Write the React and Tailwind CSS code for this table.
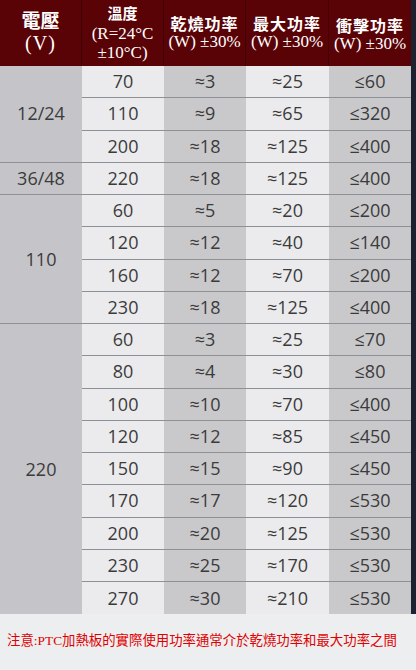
import React from 'react'

const groups = [
  {
    volt: '12/24',
    rows: [
      ['70', '≈3', '≈25', '≤60'],
      ['110', '≈9', '≈65', '≤320'],
      ['200', '≈18', '≈125', '≤400']
    ]
  },
  {
    volt: '36/48',
    rows: [['220', '≈18', '≈125', '≤400']]
  },
  {
    volt: '110',
    rows: [
      ['60', '≈5', '≈20', '≤200'],
      ['120', '≈12', '≈40', '≤140'],
      ['160', '≈12', '≈70', '≤200'],
      ['230', '≈18', '≈125', '≤400']
    ]
  },
  {
    volt: '220',
    rows: [
      ['60', '≈3', '≈25', '≤70'],
      ['80', '≈4', '≈30', '≤80'],
      ['100', '≈10', '≈70', '≤400'],
      ['120', '≈12', '≈85', '≤450'],
      ['150', '≈15', '≈90', '≤450'],
      ['170', '≈17', '≈120', '≤530'],
      ['200', '≈20', '≈125', '≤530'],
      ['230', '≈25', '≈170', '≤530'],
      ['270', '≈30', '≈210', '≤530']
    ]
  }
]

const colBg = ['bg-[#ebebed]', 'bg-[#c9c9cc]', 'bg-[#ebebed]', 'bg-[#c9c9cc]']

const headFont = { fontFamily: '"Liberation Serif", "Noto Sans CJK TC", serif' }

const App = () => {
  const total = groups.reduce((n, g) => n + g.rows.length, 0)
  let rowIndex = 0

  return (
    <div className="w-[416px] h-[670px] bg-[#eceef0] overflow-hidden">
      <div className="flex">
        <div className="w-[411px]">
          {/* header */}
          <div
            className="grid grid-cols-[82px_82px_82px_83px_82px] h-[66px] bg-[#5a0307] text-white"
            style={headFont}
          >
            <div className="flex flex-col items-center justify-center border-r border-[#3f0104]">
              <span className="text-[19px] leading-[20px] font-semibold">電壓</span>
              <span className="text-[20px] leading-[22px] tracking-[1px]">(V)</span>
            </div>
            <div className="flex flex-col items-center justify-center text-[17px] leading-[19px] border-r border-[#3f0104]">
              <span className="text-[15px] font-semibold">溫度</span>
              <span>(R=24°C</span>
              <span>±10°C)</span>
            </div>
            <div className="flex flex-col items-center justify-center text-[17px] leading-[17px] border-r border-[#3f0104] whitespace-nowrap">
              <span className="text-[16px] tracking-[1px] font-semibold">乾燒功率</span>
              <span>(W) ±30%</span>
            </div>
            <div className="flex flex-col items-center justify-center text-[17px] leading-[17px] border-r border-[#3f0104] whitespace-nowrap">
              <span className="text-[16px] tracking-[1px] font-semibold">最大功率</span>
              <span>(W) ±30%</span>
            </div>
            <div className="flex flex-col items-center justify-center text-[17px] leading-[17px] pt-1 whitespace-nowrap">
              <span className="text-[16px] tracking-[1px] font-semibold">衝擊功率</span>
              <span>(W) ±30%</span>
            </div>
          </div>

          {/* body */}
          <div
            className="grid grid-cols-[82px_82px_82px_83px_82px] auto-rows-[32.25px] text-[18px] text-[#3b3b3b]"
            style={{ fontFamily: '"Open Sans", "DejaVu Sans", sans-serif' }}
          >
            {groups.map((g, gi) => {
              const start = rowIndex
              rowIndex += g.rows.length
              const lastGroup = gi === groups.length - 1
              return (
                <React.Fragment key={g.volt}>
                  <div
                    className={`col-start-1 flex items-center justify-center bg-[#c5c5c9] ${lastGroup ? '' : 'border-b border-[#8d9094]'}`}
                    style={{ gridRow: `${start + 1} / span ${g.rows.length}` }}
                  >
                    {g.volt}
                  </div>
                  {g.rows.map((r, ri) => {
                    const isLast = start + ri === total - 1
                    return r.map((v, ci) => (
                      <div
                        key={`${g.volt}-${ri}-${ci}`}
                        className={`flex items-center justify-center ${colBg[ci]} ${isLast ? '' : 'border-b border-[#8d9094]'}`}
                        style={{ gridRow: start + ri + 1, gridColumn: ci + 2 }}
                      >
                        {v}
                      </div>
                    ))
                  })}
                </React.Fragment>
              )
            })}
          </div>
        </div>
        <div className="w-[5px] bg-[#1d2230]" />
      </div>

      {/* footer note */}
      <div
        className="pl-[7px] pt-[18px] text-[13.4px] leading-[18px] text-[#e00000] whitespace-nowrap"
        style={{ fontFamily: '"Liberation Serif", "Noto Sans CJK TC", serif' }}
      >
        注意:PTC加熱板的實際使用功率通常介於乾燒功率和最大功率之間
      </div>
    </div>
  )
}

export default App
